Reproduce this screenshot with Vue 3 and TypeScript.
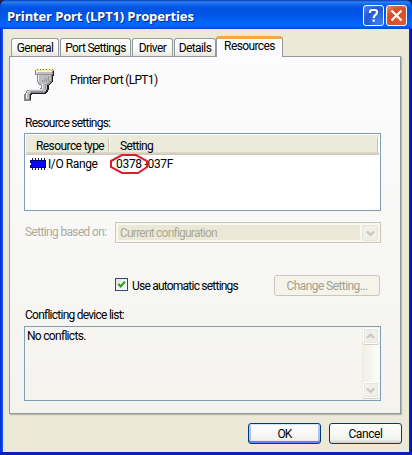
<script setup lang="ts">
import { ref } from 'vue'

interface Tab {
  label: string
  width: number
  spacing: number
}

const tabs: Tab[] = [
  { label: 'General', width: 48, spacing: -0.6 },
  { label: 'Port Settings', width: 71, spacing: -0.7 },
  { label: 'Driver', width: 41, spacing: -0.6 },
  { label: 'Details', width: 42, spacing: -0.6 },
  { label: 'Resources', width: 67, spacing: -0.6 },
]
const active = ref('Resources')
const automatic = ref(true)
</script>

<template>
  <div class="desktop">
    <main class="window">
      <header class="titlebar">
        <h1>Printer Port (LPT1) Properties</h1>
        <button class="caption help" aria-label="Help">
          <svg width="19" height="19" viewBox="0 0 19 19"><path d="M6 7V5.5Q6.2 4 8 4h3q2 0 2 2.2 0 1.5-1.5 2.6Q9.7 10 9.7 12M9.7 13.5v2.2" /></svg>
        </button>
        <button class="caption close" aria-label="Close">
          <svg width="19" height="19" viewBox="0 0 19 19"><path d="M4.5 4.5l10 10M14.5 4.5l-10 10" /></svg>
        </button>
      </header>
      <section class="body">
        <nav class="tabs">
          <button
            v-for="tab in tabs"
            :key="tab.label"
            class="tab"
            :class="{ active: tab.label === active }"
            :style="{ width: tab.width + 'px', letterSpacing: tab.spacing + 'px' }"
            @click="active = tab.label"
          >{{ tab.label }}</button>
        </nav>
        <div class="panel">
          <div class="device">
            <svg width="32" height="34" viewBox="0 0 32 34" shape-rendering="crispEdges">
              <path d="M11 3h1V2h17v1h1v5h-1v6h-1v2h-2v2h-1v5h-1v2h-1v1h-1v1H8v1H7v6H0v-7h1v-1h1v-2h1v-1h2v-1h11v-1h1v-3h-2v-1h-1v-2h-1V8h-2z" fill="#85858a" />
              <path d="M29 4h1v5h-1v6h-1v1h-2v2h-1v5h-1v2h-1v1h-1v1H8v1H7v5H6v-6h1v-1h14v-1h1v-2h1v-5h2v-1h2v-2h1V8h1z" fill="#202024" />
              <path d="M12 4h16v3h-1v7h-2v2h-2v6h-1v2h-2v1H6v2H5v5H2v-6h1v-2h2v-1h12v-1h1v-4h-1v-1h-2v-2h-1V7h-2z" fill="#bdbdc2" />
              <path d="M12 4h16v1H12zM14 8h1v6h-1zM18 17h1v5h-1zM5 22h13v1H5zM3 24h2v1H3zM2 26h1v6H2zM12 5h1v2h-1z" fill="#f0f0f2" />
              <path d="M13 7h14v1H13zM24 9h1v5h-1zM22 11h1v4h-1zM20 12h1v3h-1zM18 13h1v2h-1zM21 17h1v5h-1zM7 24h12v1H7z" fill="#929297" />
              <path d="M12 2h17v2H12z" fill="#f1e99c" />
              <path d="M13 2h1v1h-1zM16 2h1v1h-1zM19 2h1v1h-1zM22 2h1v1h-1zM25 2h1v1h-1zM28 2h1v1h-1z" fill="#817a42" />
            </svg>
            <span class="t-name">Printer Port (LPT1)</span>
          </div>
          <p class="label t-res">Resource settings:</p>
          <div class="list">
            <div class="list-head">
              <span class="col type">Resource type</span>
              <span class="col setting">Setting</span>
            </div>
            <div class="list-row">
              <svg width="16" height="12" viewBox="0 0 16 12" shape-rendering="crispEdges">
                <path d="M2 0h1v12H2zM5 0h1v12H5zM8 0h1v12H8zM11 0h1v12h-1zM14 0h1v12h-1z" fill="#222" />
                <path d="M0 2h16v8H0z" fill="#000080" /><path d="M1 3h14v6H1z" fill="#0808ff" />
                <path d="M0 5h1v2H0z" fill="#fff" />
              </svg>
              <span class="io">I/O Range</span>
              <span class="range">0378 -037F
                <svg class="mark" width="40" height="22" viewBox="0 0 40 22"><path d="M2 8L13 2H27L38 8V14L29 20H13L2 14Z" /></svg>
              </span>
            </div>
          </div>
          <div class="based">
            <span class="t-based">Setting based on:</span>
            <div class="combo">
              <span class="value">Current configuration</span>
              <span class="drop"><svg width="9" height="7" viewBox="0 0 9 7"><path d="M1 1.5l3.5 3.5L8 1.5" /></svg></span>
            </div>
          </div>
          <div class="auto">
            <button class="check" role="checkbox" :aria-checked="automatic" @click="automatic = !automatic">
              <svg v-if="automatic" width="9" height="9" viewBox="0 0 9 9"><path d="M1.3 3.8l2.3 2.6 4.3-4.6" /></svg>
            </button>
            <span class="t-auto">Use automatic settings</span>
            <button class="change" disabled>Change Setting...</button>
          </div>
          <p class="label t-conf">Conflicting device list:</p>
          <div class="conflicts">
            <span class="t-none">No conflicts.</span>
            <div class="scroll">
              <span class="arrow"><svg width="9" height="7" viewBox="0 0 9 7"><path d="M1 5l3.5-3.5L8 5" /></svg></span>
              <span class="arrow"><svg width="9" height="7" viewBox="0 0 9 7"><path d="M1 1.5l3.5 3.5L8 1.5" /></svg></span>
            </div>
          </div>
        </div>
        <footer>
          <button class="push default">OK</button>
          <button class="push t-cancel">Cancel</button>
        </footer>
      </section>
    </main>
  </div>
</template>

<style>
body { margin: 0; }
</style>

<style scoped>
* { box-sizing: border-box; }
.desktop { width: 412px; height: 455px; background: #16264c; font: 12px/16px Roboto, "Liberation Sans", sans-serif; letter-spacing: -0.4px; color: #000; white-space: nowrap; }
.window { width: 412px; height: 455px; border-radius: 7px 7px 0 0; overflow: hidden; background: linear-gradient(90deg, #0831d9 0, #0831d9 1px, #1661ee 3px, #0855dd 50%, #0831c8 99.3%, #00138c 100%); padding: 0 3px 3px; box-shadow: inset 0 -3px #0a22b0; }
h1, p { margin: 0; }
button { font: inherit; letter-spacing: inherit; color: inherit; padding: 0; margin: 0; }
.titlebar { height: 29px; margin: 0 -3px; padding: 2px 5px 0 7px; display: flex; align-items: center; background: linear-gradient(#0a3bae 0, #2c82f5 2px, #1268ee 4px, #0054e3 8px, #0054e3 14px, #0363fa 22px, #0365ff 26px, #0047cd 29px); }
h1 { flex: 1; font: bold 13px/20px "Open Sans", "Noto Sans", sans-serif; letter-spacing: -0.13px; color: #fff; text-shadow: 1px 1px #0a2f87; }
.caption { width: 21px; height: 21px; border: 1px solid #fff; border-radius: 3px; display: flex; margin-left: 2px; }
.caption svg { fill: none; stroke: #fff; stroke-width: 2.2; }
.help { background: radial-gradient(circle at 80% 85%, #3b7df8, #2457d2 60%, #5d86e8); }
.close { background: radial-gradient(circle at 75% 85%, #e25a32, #d74c28 60%, #e88b70); }
.body { height: 423px; background: #ece9d8; padding: 7px 8px 0 6px; }
.tabs { height: 20px; display: flex; align-items: flex-end; gap: 1px; padding-left: 2px; }
.tab { height: 18px; border: 1px solid #919b9c; border-bottom: 0; border-radius: 3px 3px 0 0; background: linear-gradient(#fff, #f7f7f3 70%, #e8e6dc); flex: none; text-align: center; line-height: 18px; }
.tab.active { height: 21px; margin: 0 0 -1px -1px; border-top: 3px solid #f4a93c; background: #fcfcfe; position: relative; line-height: 14px; padding-bottom: 4px; }
.panel { width: 392px; height: 358px; border: 1px solid #919b9c; box-shadow: 1px 1px 1px #bbb9a9; background: linear-gradient(#fcfcfe, #f4f3ee); padding: 10px 19px 0 14px; }
.device { height: 48px; display: flex; }
.device span { margin: 5px 0 0 14px; letter-spacing: -0.68px; }
.label { height: 18px; padding-left: 1px; letter-spacing: -0.75px; }
.list { width: 357px; height: 78px; border: 1px solid #7f9db9; background: #fff; padding: 1px; }
.list-head { height: 20px; background: linear-gradient(#ebeadb 17px, #dedcc9 17px, #cbc7b8 20px); display: flex; padding: 3px 1px 0 10px; }
.col { height: 14px; border-right: 1px solid #c7c5b2; box-shadow: 1px 0 #fff; }
.type { width: 73px; letter-spacing: -0.58px; }
.setting { flex: 1; padding-left: 11px; letter-spacing: -0.65px; }
.list-row { height: 18px; display: flex; align-items: center; padding-left: 4px; }
.io { width: 70px; padding-left: 2px; }
.range { position: relative; letter-spacing: -0.3px; }
.mark { position: absolute; left: -7px; top: -3px; fill: none; stroke: #d91f2b; stroke-width: 2; }
.based { margin-top: 11px; display: flex; height: 21px; width: 357px; color: #aca899; }
.t-based { width: 91px; padding: 2px 0 0 1px; text-shadow: 1px 1px #fff; letter-spacing: -0.65px; }
.combo { width: 266px; height: 21px; border: 1px solid #c9c7ba; padding: 2px; display: flex; background: #f8f7f0; }
.value { flex: 1; background: #ebe8d8; line-height: 16px; padding-left: 2px; margin-right: 2px; letter-spacing: -0.78px; }
.drop, .arrow { border: 1px solid #e6e5dc; border-radius: 2px; background: #f0efe8; width: 16px; height: 16px; display: flex; align-items: center; justify-content: center; }
.drop svg, .arrow svg { fill: none; stroke: #c9c7ba; stroke-width: 2.2; }
.auto { margin: 32px 0 0 91px; height: 21px; display: flex; align-items: center; width: 265px; }
.check { width: 13px; height: 13px; border: 1px solid #1c5180; background: linear-gradient(135deg, #e1e1dc, #fff); display: flex; padding: 1px; margin-top: -2px; }
.check svg { fill: none; stroke: #21a121; stroke-width: 2; }
.t-auto { margin-left: 4px; letter-spacing: -0.78px; }
.change { margin-left: auto; width: 106px; height: 21px; border: 1px solid #c9c7ba; border-radius: 3px; background: #f5f4ea; color: #a1a192; letter-spacing: -0.58px; }
.t-conf { margin-top: 11px; height: 19px; }
.conflicts { width: 357px; height: 75px; border: 1px solid #7f9db9; padding: 1px; display: flex; justify-content: space-between; }
.t-none { padding-left: 1px; letter-spacing: -0.7px; }
.scroll { width: 17px; background: linear-gradient(90deg, #eeede5, #fefefb); display: flex; flex-direction: column; justify-content: space-between; align-items: center; }
.arrow { border-color: #fff; box-shadow: 0 1px #d3d1c4, inset 0 0 0 1px #e7e6df; margin-bottom: 1px; }
footer { height: 30px; margin-top: 9px; display: flex; justify-content: flex-end; gap: 8px; margin-right: -1px; }
.push { width: 73px; height: 21px; border: 1px solid #003c74; border-radius: 3px; background: linear-gradient(#fff, #f3f3ee 80%, #d6d0c5); }
.default { letter-spacing: -0.8px; box-shadow: inset 0 1px #cee7ff, inset 0 -2px #6982ee, inset 2px 0 #a9c4f5, inset -2px 0 #a9c4f5; }
</style>
